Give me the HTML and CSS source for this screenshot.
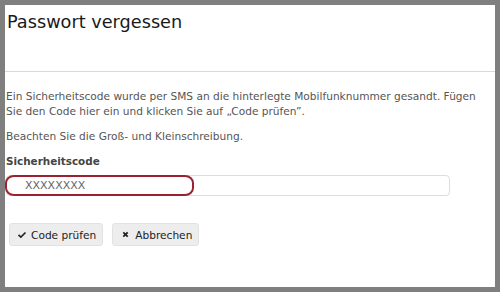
FILE: index.html
```html
<!DOCTYPE html>
<html>
<head>
<meta charset="utf-8">
<link rel="stylesheet" href="styles.css">
</head>
<body>
<div class="frame">
  <div class="header"><h1 class="title">Passwort vergessen</h1></div>
  <div class="content">
    <p class="text">Ein Sicherheitscode wurde per SMS an die hinterlegte Mobilfunknummer gesandt. Fügen Sie den Code hier ein und klicken Sie auf „Code prüfen”.</p>
    <p class="text">Beachten Sie die Groß- und Kleinschreibung.</p>
    <label class="label">Sicherheitscode</label>
    <div class="field">
      <div class="input">XXXXXXXX</div>
      <div class="mark"></div>
    </div>
    <div class="actions">
      <button class="btn"><svg class="ico" viewBox="0 0 16 16"><path d="M1.5 8.6 L3.4 6.7 L6.2 9.4 L12.6 3 L14.5 4.9 L6.2 13.2 Z" fill="#222"/></svg>Code prüfen</button>
      <button class="btn"><svg class="ico ico-x" viewBox="0 0 16 16"><path d="M3 5.2 L5.2 3 L8 5.8 L10.8 3 L13 5.2 L10.2 8 L13 10.8 L10.8 13 L8 10.2 L5.2 13 L3 10.8 L5.8 8 Z" fill="#222"/></svg>Abbrechen</button>
    </div>
  </div>
</div>
</body>
</html>
```
FILE: styles.css
```css
html, body { margin: 0; padding: 0; }
body {
  background: #7f7f7f;
  width: 500px;
  height: 292px;
  box-sizing: border-box;
  padding: 5px;
  font-family: "DejaVu Sans", Verdana, sans-serif;
}
.frame {
  background: #fff;
  height: 282px;
  width: 490px;
}
.header {
  height: 66px;
  border-bottom: 1px solid #d9d9d9;
}
.title {
  margin: 0;
  padding: 6px 0 0 2px;
  font-size: 17.7px;
  font-weight: normal;
  color: #1a1a1a;
  line-height: 22px;
}
.content {
  padding: 17px 0 0 1px;
}
.text {
  margin: 0 0 10px 0;
  font-size: 10.6px;
  line-height: 15px;
  color: #555;
}
.label {
  display: block;
  font-size: 10.4px;
  font-weight: bold;
  color: #444;
  line-height: 15px;
  margin-top: 1px;
}
.field {
  position: relative;
  margin-top: 6px;
  width: 444px;
}
.input {
  height: 19px;
  border: 1px solid #ddd;
  border-radius: 4px;
  box-sizing: content-box;
  padding-left: 18px;
  font-size: 11px;
  line-height: 19px;
  color: #666;
}
.mark {
  position: absolute;
  left: -1px;
  top: 0px;
  width: 185px;
  height: 17px;
  border: 2px solid #9b2230;
  border-radius: 9px / 8px;
}
.actions {
  display: flex;
  gap: 9px;
  margin-top: 27px;
  padding-left: 3px;
}
.btn {
  display: flex;
  align-items: center;
  height: 23px;
  padding: 0 6px 0 7px;
  background: #ededed;
  border: 1px solid #e2e2e2;
  border-radius: 3px;
  font-family: "DejaVu Sans", Verdana, sans-serif;
  font-size: 10.6px;
  color: #222;
}
.ico {
  width: 10px;
  height: 10px;
  margin-right: 4px;
}
.ico-x { width: 9px; height: 9px; margin-left: 1px; margin-right: 5px; }
```
